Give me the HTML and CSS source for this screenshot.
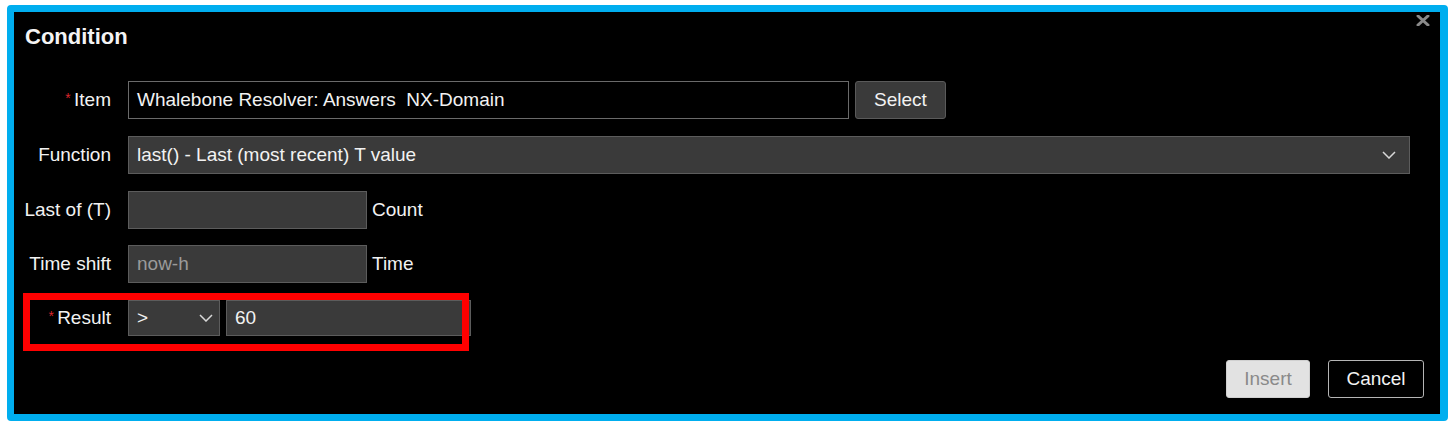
FILE: index.html
```html
<!DOCTYPE html>
<html>
<head>
<meta charset="utf-8">
<link rel="stylesheet" href="styles.css">
</head>
<body>
<div class="dialog">
  <div class="head">
    <h2 class="title">Condition</h2>
    <button class="close" aria-label="Close">
      <svg width="14" height="11" viewBox="0 0 14 11"><path d="M2 1 L12 10 M12 1 L2 10" stroke="#8a8a8a" stroke-width="3" stroke-linecap="round"/></svg>
    </button>
  </div>
  <div class="form">
    <div class="row">
      <label class="lbl"><span class="req">*</span> Item</label>
      <div class="field field-item">Whalebone Resolver: Answers&nbsp; NX-Domain</div>
      <button class="btn btn-select">Select</button>
    </div>
    <div class="row">
      <label class="lbl">Function</label>
      <div class="field field-fn">
        <span>last() - Last (most recent) T value</span>
        <svg class="chev" width="14" height="8" viewBox="0 0 14 8"><path d="M1 1 L7 7 L13 1" fill="none" stroke="#d8d8d8" stroke-width="1.5"/></svg>
      </div>
    </div>
    <div class="row">
      <label class="lbl">Last of (T)</label>
      <div class="field field-short"></div>
      <span class="unit">Count</span>
    </div>
    <div class="row">
      <label class="lbl">Time shift</label>
      <div class="field field-short placeholder">now-h</div>
      <span class="unit">Time</span>
    </div>
    <div class="row row-result">
      <label class="lbl"><span class="req">*</span> Result</label>
      <div class="field field-op">
        <span>&gt;</span>
        <svg class="chev" width="14" height="8" viewBox="0 0 14 8"><path d="M1 1 L7 7 L13 1" fill="none" stroke="#d8d8d8" stroke-width="1.5"/></svg>
      </div>
      <div class="field field-val">60</div>
      <div class="highlight"></div>
    </div>
  </div>
  <div class="footer">
    <button class="btn btn-insert">Insert</button>
    <button class="btn btn-cancel">Cancel</button>
  </div>
</div>
</body>
</html>
```

FILE: styles.css
```css
html, body {
  margin: 0;
  padding: 0;
  background: #ffffff;
}
body {
  font-family: "Liberation Sans", Arial, sans-serif;
  font-size: 19px;
  color: #f2f2f2;
}
.dialog {
  box-sizing: border-box;
  margin: 5px 0 0 7px;
  width: 1441px;
  height: 416px;
  background: #000;
  border: 7px solid #00aeef;
  border-right-width: 8px;
  border-radius: 4px;
  display: flex;
  flex-direction: column;
}
.head {
  display: flex;
  justify-content: space-between;
  align-items: flex-start;
}
.title {
  margin: 12px 0 0 11px;
  font-size: 22px;
  line-height: 26px;
  font-weight: bold;
  color: #f4f4f4;
}
.close {
  margin: 3px 10px 0 0;
  padding: 0;
  border: 0;
  background: transparent;
  width: 14px;
  height: 11px;
  display: flex;
}
.form {
  margin-top: 31px;
  display: flex;
  flex-direction: column;
  gap: 16.75px;
}
.row {
  display: flex;
  align-items: center;
  height: 38px;
}
.lbl {
  width: 97px;
  flex: none;
  text-align: right;
  margin-right: 17px;
  color: #f2f2f2;
}
.req {
  color: #d9262c;
  font-size: 14px;
  vertical-align: 3px;
  margin-right: -2px;
}
.field {
  box-sizing: border-box;
  height: 38px;
  border: 1px solid #5c5c5c;
  background: #3a3a3a;
  padding: 0 8px;
  display: flex;
  align-items: center;
  justify-content: space-between;
  color: #f2f2f2;
  flex: none;
}
.field-item {
  width: 721px;
  background: #000;
  border-color: #6a6a6a;
}
.field-fn {
  width: 1282px;
}
.field-fn .chev {
  margin-right: 5px;
}
.field-short {
  width: 239px;
}
.placeholder {
  color: #9a9a9a;
}
.unit {
  margin-left: 5px;
  color: #f2f2f2;
}
.row-result {
  position: relative;
  height: 36px;
}
.row-result .field {
  height: 36px;
}
.field-op {
  width: 92px;
}
.field-op .chev {
  margin-right: -2px;
}
.field-val {
  margin-left: 6px;
  width: 245px;
}
.highlight {
  position: absolute;
  left: 9px;
  top: -7px;
  width: 446px;
  height: 58px;
  box-sizing: border-box;
  border: 7px solid #ff0000;
  pointer-events: none;
}
.btn {
  box-sizing: border-box;
  height: 38px;
  font-family: "Liberation Sans", Arial, sans-serif;
  font-size: 19px;
  border-radius: 3px;
  padding: 0;
  cursor: pointer;
}
.btn-select {
  margin-left: 6px;
  width: 91px;
  background: #3a3a3a;
  border: 1px solid #5a5a5a;
  color: #f2f2f2;
}
.footer {
  margin-top: auto;
  padding: 0 16px 16px 0;
  display: flex;
  justify-content: flex-end;
  gap: 18px;
}
.btn-insert {
  width: 84px;
  background: #e2e2e2;
  border: 1px solid #d0d0d0;
  color: #8a8a8a;
}
.btn-cancel {
  width: 96px;
  background: #000;
  border: 1px solid #b5b5b5;
  color: #f2f2f2;
}
```
